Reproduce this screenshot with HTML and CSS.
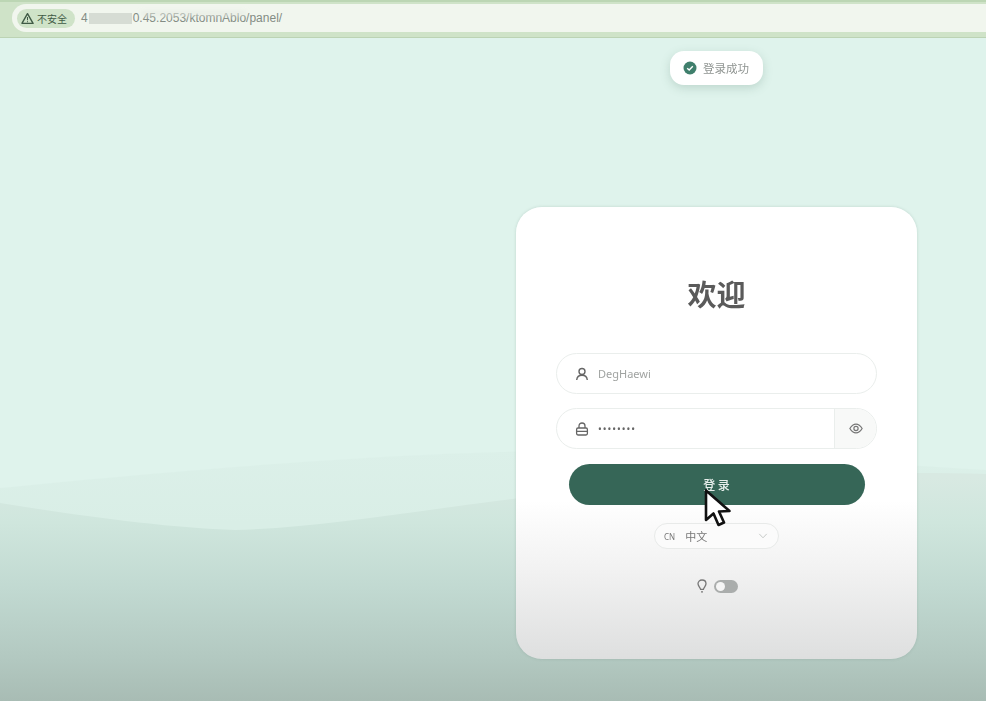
FILE: index.html
```html
<!DOCTYPE html>
<html lang="zh-CN">
<head>
    <meta charset="UTF-8">
    <meta name="viewport" content="width=device-width, initial-scale=1.0">
    <title>欢迎</title>
    <link rel="stylesheet" href="styles.css">
</head>
<body>
    <header class="browser-bar">
        <div class="url-pill">
            <span class="security-chip">
                <svg class="warn-icon" viewBox="0 0 14 14" width="13" height="13"><path d="M7 1.8 L13 12.2 H1 Z" fill="none" stroke="#3f5a45" stroke-width="1.5" stroke-linejoin="round"/><path d="M7 5.5 V9 M7 10 V11" stroke="#3f5a45" stroke-width="1.1"/></svg>
                不安全
            </span>
            <span class="url-text">4<span class="url-mask"></span>0.45.2053/ktomnAblo/panel/<span class="url-smear"></span></span>
        </div>
    </header>

    <main class="stage">
        <svg class="waves" viewBox="0 0 986 663" preserveAspectRatio="none">
            <defs>
                <linearGradient id="backWave" x1="0" y1="410" x2="0" y2="663" gradientUnits="userSpaceOnUse">
                    <stop offset="0" stop-color="#dcf0e9"/>
                    <stop offset="0.3" stop-color="#d9eee6"/>
                    <stop offset="1" stop-color="#d9eee6"/>
                </linearGradient>
                <linearGradient id="frontWave" x1="0" y1="440" x2="0" y2="663" gradientUnits="userSpaceOnUse">
                    <stop offset="0" stop-color="#d8e9e2"/>
                    <stop offset="0.2" stop-color="#cfe6dd"/>
                    <stop offset="0.5" stop-color="#c1d9d1"/>
                    <stop offset="0.8" stop-color="#b3c9c1"/>
                    <stop offset="1" stop-color="#a8bcb4"/>
                </linearGradient>
            </defs>
            <path d="M0 450 C150 435 350 418 500 414 C700 408 850 425 986 432 V663 H0 Z" fill="url(#backWave)"/>
            <path d="M0 465 C80 478 170 490 235 492 C320 490 420 472 520 460 C680 440 850 432 986 436 V663 H0 Z" fill="url(#frontWave)"/>
        </svg>

        <div class="toast">
            <svg viewBox="0 0 14 14" width="14" height="14"><circle cx="7" cy="7" r="6.5" fill="#3f7f6c"/><path d="M4.2 7.2 L6.2 9 L9.8 5.2" fill="none" stroke="#fff" stroke-width="1.4"/></svg>
            <span>登录成功</span>
        </div>

        <section class="login-card">
            <h1 class="login-title">欢迎</h1>

            <div class="field">
                <svg class="field-icon" viewBox="0 0 14 14" width="14" height="14"><circle cx="7" cy="4.5" r="3" fill="none" stroke="#666" stroke-width="1.4"/><path d="M1.7 13 C2 9.8 4.2 8.2 7 8.2 C9.8 8.2 12 9.8 12.3 13" fill="none" stroke="#666" stroke-width="1.4"/></svg>
                <input class="field-input" type="text" value="DegHaewi">
            </div>

            <div class="field">
                <svg class="field-icon" viewBox="0 0 14 14" width="14" height="14"><rect x="1.6" y="6" width="10.8" height="7" rx="1.4" fill="none" stroke="#666" stroke-width="1.3"/><path d="M4 6 V4 C4 2.2 5.3 1 7 1 C8.7 1 10 2.2 10 4 V6 M1.6 9.4 H12.4" fill="none" stroke="#666" stroke-width="1.3"/></svg>
                <input class="field-input dots" type="password" value="password">
                <span class="field-addon">
                    <svg viewBox="0 0 16 12" width="14" height="11"><path d="M1 6 C3 2.6 5.3 1 8 1 C10.7 1 13 2.6 15 6 C13 9.4 10.7 11 8 11 C5.3 11 3 9.4 1 6 Z" fill="none" stroke="#777" stroke-width="1.4"/><circle cx="8" cy="6" r="2.4" fill="none" stroke="#777" stroke-width="1.4"/></svg>
                </span>
            </div>

            <button class="login-btn" type="button">登 录</button>

            <div class="lang-select">
                <span class="lang-code">CN</span>
                <span class="lang-name">中文</span>
                <svg class="lang-arrow" viewBox="0 0 12 8" width="10" height="6"><path d="M1 1.2 L6 6.4 L11 1.2" fill="none" stroke="#c4c8c6" stroke-width="1.3"/></svg>
            </div>

            <div class="theme-row">
                <svg viewBox="0 0 10 14" width="10" height="14"><path d="M5 1 C7.4 1 9 2.7 9 4.8 C9 6.8 7 8.2 6.4 10.4 H3.6 C3 8.2 1 6.8 1 4.8 C1 2.7 2.6 1 5 1 Z M4 12.8 H6" fill="none" stroke="#777" stroke-width="1.3"/></svg>
                <span class="toggle"><span class="toggle-knob"></span></span>
            </div>
        </section>

        <svg class="cursor" viewBox="0 0 28 38" width="28" height="38"><path d="M2 1.5 L2 31 L9.5 24.5 L14.5 36 L20 33.5 L15 22.5 L25.5 22 Z" fill="#fff" stroke="#111" stroke-width="2.6" stroke-linejoin="round"/></svg>
    </main>
</body>
</html>
```

FILE: styles.css
```css
* { box-sizing: border-box; }
html, body { margin: 0; height: 100%; overflow: hidden; }
body { display: flex; flex-direction: column; font-family: "Noto Sans", "Noto Sans CJK SC", sans-serif; background-color: #dff3ec; color: #666; filter: blur(0.55px); }

.browser-bar { height: 38px; flex: none; padding: 2px 0 0 12px; background-color: #cfe3c8; border-top: 2px solid #bcd6b4; border-bottom: 1px solid #bcd3b4; }
.url-pill { height: 28px; display: flex; align-items: center; gap: 6px; padding-left: 5px; background-color: #f1f6ee; border-radius: 14px 0 0 14px; }
.security-chip { height: 19px; width: 58px; display: flex; align-items: center; gap: 3px; padding-left: 4px; background-color: #cfe3c8; border-radius: 10px; font-size: 10px; color: #3f5a45; }
.url-text { position: relative; font-family: "Liberation Sans", sans-serif; font-size: 12px; color: #838c84; }
.url-mask { display: inline-block; width: 43px; height: 11px; margin: 0 1px -2px; background-color: #d6dcd4; }
.url-smear { position: absolute; top: 0; left: 60px; width: 105px; height: 5px; background-color: #e6ebe3; filter: blur(2px); opacity: 0.7; }

.stage { position: relative; flex: 1; display: flex; justify-content: flex-end; align-items: flex-start; padding: 169px 69px 0 0; }
.waves { position: absolute; top: 0; left: 0; width: 100%; height: 100%; }

.toast { position: absolute; top: 13px; left: 670px; width: 93px; height: 34px; display: flex; align-items: center; gap: 6px; padding-left: 13px; background-color: #fff; border-radius: 14px; box-shadow: 0 3px 10px rgba(90, 130, 115, 0.25); font-size: 11.5px; color: #8f9491; }

.login-card { position: relative; width: 401px; height: 452px; padding: 68px 40px 0; display: flex; flex-direction: column; align-items: center; background: linear-gradient(to bottom, #fff 0%, #fff 65%, #f2f2f2 80%, #dedfdf 100%); border-radius: 26px; box-shadow: 0 0 3px rgba(90, 120, 110, 0.25); }
.login-title { margin: 0 0 38px; height: 40px; line-height: 40px; font-size: 29px; font-weight: 700; color: #5a5a5a; }

.field { width: 100%; height: 41px; margin-bottom: 14px; display: flex; align-items: center; padding-left: 18px; background-color: #fff; border: 1.5px solid #eaeeec; border-radius: 21px; overflow: hidden; }
.field-icon { flex: none; }
.field-input { flex: 1; min-width: 0; height: 100%; margin-left: 9px; padding: 0; border: none; outline: none; background: transparent; font-family: "Noto Sans", sans-serif; font-size: 11px; color: #a0a3a1; }
.dots { font-size: 10px; letter-spacing: 1px; color: #666; }
.field-addon { flex: none; width: 42px; height: 100%; display: flex; align-items: center; justify-content: center; background-color: #f8f9f8; border-left: 1.5px solid #eaeeec; }

.login-btn { width: 296px; height: 41px; margin: 1px 0 18px; flex: none; background-color: #366657; color: #e8efec; border: none; border-radius: 21px; font-family: "Noto Sans CJK SC", sans-serif; font-size: 12px; font-weight: 500; cursor: pointer; }

.lang-select { width: 125px; height: 26px; display: flex; align-items: center; padding: 0 10px 0 9px; background-color: #fbfbfb; border: 1.5px solid #e8eae9; border-radius: 13px; font-size: 11px; color: #777; }
.lang-code { font-size: 8px; margin-right: 10px; }
.lang-name { flex: 1; }

.theme-row { margin-top: 30px; margin-left: 2px; display: flex; align-items: center; gap: 7px; }
.toggle { width: 24px; height: 13px; padding: 2px; display: block; background-color: #aaadac; border-radius: 7px; }
.toggle-knob { width: 9px; height: 9px; display: block; background-color: #f5f5f5; border-radius: 50%; }

.cursor { position: absolute; top: 451px; left: 704px; }
```
